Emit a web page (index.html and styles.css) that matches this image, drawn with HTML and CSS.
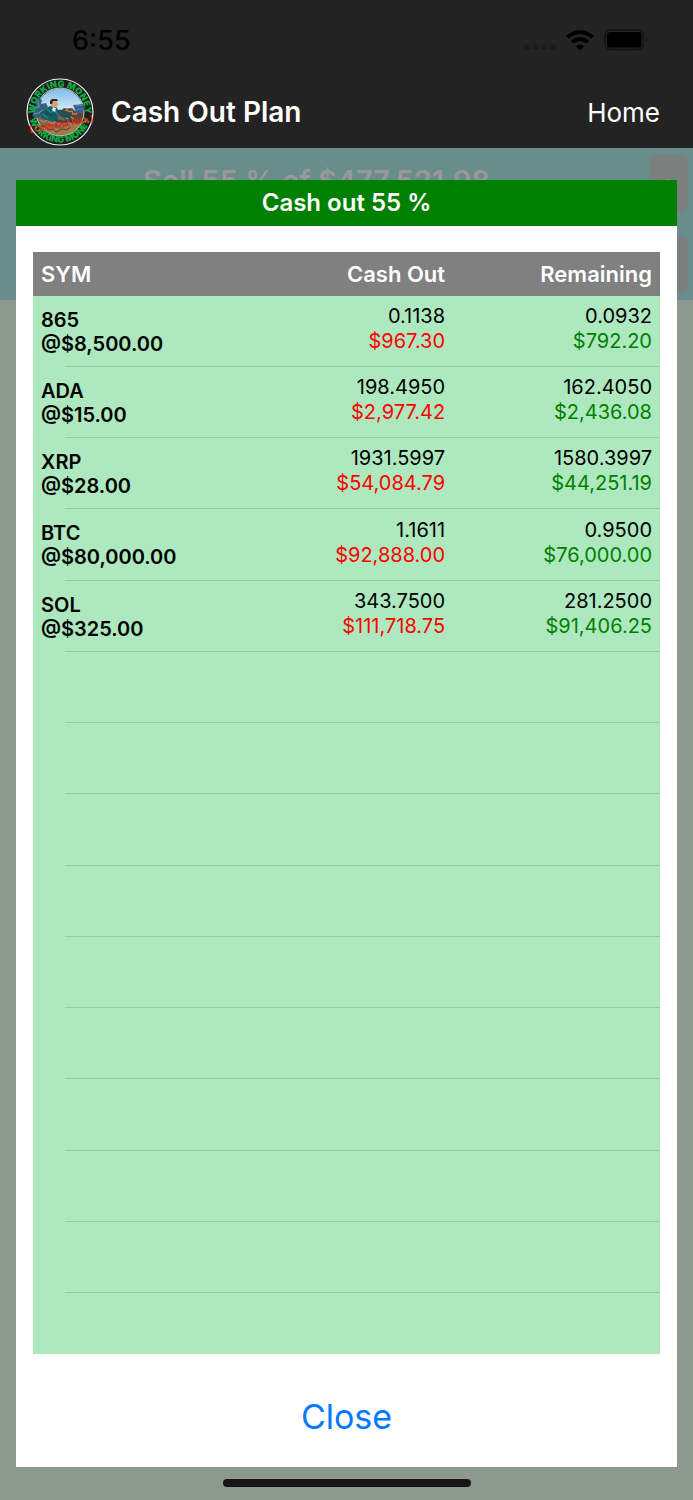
FILE: index.html
```html
<!DOCTYPE html>
<html lang="en">
<head>
<meta charset="utf-8">
<meta name="viewport" content="width=device-width, initial-scale=1">
<title>Cash Out Plan</title>
<link rel="stylesheet" href="styles.css">
</head>
<body>
<div class="screen">
  <header class="topbar">
    <div class="status">
      <span class="time">6:55</span>
      <div class="indicators">
        <svg class="signal" width="32" height="6" viewBox="0 0 32 6" aria-hidden="true"><g fill="#1a1a1a"><circle cx="3" cy="3" r="2.800"/><circle cx="11.600" cy="3" r="2.800"/><circle cx="20.200" cy="3" r="2.800"/><circle cx="28.800" cy="3" r="2.800"/></g></svg>
        <svg class="wifi" width="28" height="22" viewBox="0 0 28 22" aria-hidden="true"><path d="M1.500 8.200A18 18 0 0 1 26.500 8.200" fill="none" stroke="#000" stroke-width="4"/><path d="M6.300 13.100A11.200 11.200 0 0 1 21.700 13.100" fill="none" stroke="#000" stroke-width="4"/><path d="M14 21.500L9.800 17.300A6 6 0 0 1 18.200 17.300Z" fill="#000"/></svg>
        <svg class="battery" width="45" height="22" viewBox="0 0 45 22" aria-hidden="true"><rect x="1" y="1" width="38.500" height="19.500" rx="6" fill="none" stroke="#151515" stroke-width="1.800"/><rect x="3" y="3" width="34.500" height="15.500" rx="3.500" fill="#000"/><path d="M42 7.800C44.400 8.500 44.400 13 42 13.700Z" fill="#151515"/></svg>
      </div>
    </div>
    <nav class="nav">
      <svg class="logo" viewBox="0 0 68 68" role="img" aria-label="Working Money Cash Out Plan">
        <defs>
          <path id="arc-top" d="M9.500 39A25 25 0 1 1 58.500 39"/>
          <path id="arc-bottom" d="M3.500 28A31 31 0 1 0 64.500 28"/>
          <clipPath id="scene"><circle cx="34" cy="34" r="23.500"/></clipPath>
          <linearGradient id="sky" x1="0" y1="0" x2="0" y2="1"><stop offset="0" stop-color="#79b9e8"/><stop offset="0.550" stop-color="#e4f3fb"/></linearGradient>
        </defs>
        <circle cx="34" cy="34" r="33" fill="#1c1d1c" stroke="#eee" stroke-width="1.200"/>
        <g clip-path="url(#scene)">
          <rect x="9" y="9" width="50" height="50" fill="url(#sky)"/>
          <path d="M9 41l10-5 14 0 5-4 5-2 6 3 10-3v30H9z" fill="#806047"/>
          <path d="M33 34l5-4 4 1 4-1 5 5 8-2v9l-10 4-9-3z" fill="#57443a"/>
          <path d="M12 52l10-4 13 3 12-6 12 3v12H12z" fill="#a27850"/>
          <path d="M39 33l2-1 2 2 3-1 1 3 4 0M36 37l3 1 2 3 4-2 4 3M14 42l4 2 3-2 4 4 5-2 6 4 4-4 7 2" fill="none" stroke="#b58660" stroke-width="1.300"/>
          <path d="M12 46l3 2 4 0 4 4 4-1 3 3 6-3 4 1 5-3" fill="none" stroke="#5a3e2a" stroke-width="1"/>
        </g>
        <circle cx="34" cy="34" r="24" fill="none" stroke="#ddd" stroke-width="0.900"/>
        <path d="M47 27l11-1 1 4-3 5-6-1z" fill="#315f8e"/>
        <path d="M49 28l8-1M51 31l6 0" stroke="#5488b4" stroke-width="1"/>
        <path d="M5 31l5-3-1-4 3-4 4 2-1 4 5-1 2 4-4 3 1 4-7 4-6-2 2-3z" fill="#345f7c"/>
        <path d="M8 31l6-3M12 22l1 7M7 36l6-1 4-3" fill="none" stroke="#7095ad" stroke-width="1.100"/>
        <path d="M19 31l5-3 6 1 4 5-3 9-8 0-8-3-1-5z" fill="#126166"/>
        <path d="M19 33l5 4 8-1 11 3 2 4-8 1-8-2M30 36l4-3 10 3" fill="none" stroke="#1b5058" stroke-width="2.600"/>
        <path d="M21 31l3 3 5-1 4 5M16 36l6 4" fill="none" stroke="#2a8583" stroke-width="1.300"/>
        <path d="M26 22l4 0 2 4-1 3-5 0-2-4z" fill="#d99d75"/>
        <path d="M24 26l0-3 2-2 5 0 1 2-5 0-1 3z" fill="#38241b"/>
        <path d="M27 29l3 1-1 4-3-2z" fill="#eee"/>
        <text class="ring-text"><textPath href="#arc-top" startOffset="50%">WORKING MONEY</textPath></text>
        <text class="ring-text"><textPath href="#arc-bottom" startOffset="50%">WORKING MONEY</textPath></text>
        <text class="stamp" x="35" y="49" transform="rotate(-10 35 46)">[ Cash Out Plan ]</text>
      </svg>
      <h1 class="title">Cash Out Plan</h1>
      <a class="home" href="#">Home</a>
    </nav>
  </header>

  <section class="summary">
    <p class="sell">Sell 55 % of $477,521.98</p>
    <div class="steps">
      <button class="step" type="button">+</button>
      <button class="step" type="button">−</button>
    </div>
  </section>

  <main class="modal" role="dialog" aria-labelledby="plan-title">
    <h2 class="modal-title" id="plan-title">Cash out 55 %</h2>
    <div class="sheet">
      <table class="plan">
        <thead>
          <tr><th class="sym">SYM</th><th class="out">Cash Out</th><th class="rest">Remaining</th></tr>
        </thead>
        <tbody>
          <tr><th scope="row">865<br>@$8,500.00</th><td>0.1138<span class="sold">$967.30</span></td><td>0.0932<span class="kept">$792.20</span></td></tr>
          <tr><th scope="row">ADA<br>@$15.00</th><td>198.4950<span class="sold">$2,977.42</span></td><td>162.4050<span class="kept">$2,436.08</span></td></tr>
          <tr><th scope="row">XRP<br>@$28.00</th><td>1931.5997<span class="sold">$54,084.79</span></td><td>1580.3997<span class="kept">$44,251.19</span></td></tr>
          <tr><th scope="row">BTC<br>@$80,000.00</th><td>1.1611<span class="sold">$92,888.00</span></td><td>0.9500<span class="kept">$76,000.00</span></td></tr>
          <tr><th scope="row">SOL<br>@$325.00</th><td>343.7500<span class="sold">$111,718.75</span></td><td>281.2500<span class="kept">$91,406.25</span></td></tr>
          <tr><td colspan="3"></td></tr>
          <tr><td colspan="3"></td></tr>
          <tr><td colspan="3"></td></tr>
          <tr><td colspan="3"></td></tr>
          <tr><td colspan="3"></td></tr>
          <tr><td colspan="3"></td></tr>
          <tr><td colspan="3"></td></tr>
          <tr><td colspan="3"></td></tr>
          <tr><td colspan="3"></td></tr>
        </tbody>
      </table>
    </div>
    <button class="close" type="button">Close</button>
  </main>
  <div class="home-indicator"></div>
</div>
</body>
</html>
```
FILE: styles.css
```css
* { box-sizing: border-box; }

body {
  margin: 0;
  font-family: Inter, "Liberation Sans", sans-serif;
  color: #000;
}

.screen {
  position: relative;
  min-height: 100vh;
  background: #8c998e;
}

.topbar {
  background: #232323;
  height: 148px;
}

.status {
  display: flex;
  justify-content: space-between;
  align-items: center;
  height: 76px;
  padding: 4px 44px 0 72px;
}

.time {
  font-size: 27px;
  font-weight: 500;
}

.indicators {
  display: flex;
  align-items: center;
  gap: 10px;
}

.signal { margin-top: 14px; }

.nav {
  display: flex;
  align-items: center;
  height: 72px;
  padding: 0 33px 0 26px;
}

.logo {
  width: 68px;
  height: 68px;
  overflow: visible;
}

.ring-text {
  font-size: 9px;
  font-weight: 900;
  fill: #11a840;
  text-anchor: middle;
}

.stamp {
  font-size: 8px;
  font-weight: 700;
  fill: #f22208;
  text-anchor: middle;
}

.title {
  margin: 0 auto 0 17px;
  font-size: 28px;
  font-weight: 600;
  color: #fff;
}

.home {
  font-size: 26px;
  color: #fff;
  text-decoration: none;
}

.summary {
  display: flex;
  height: 152px;
  padding: 7px 5px 7px 0;
  background: #688d8a;
}

.sell {
  flex: 1;
  margin: 8px 16px 0 0;
  text-align: center;
  font-size: 29px;
  line-height: 36px;
  font-weight: 600;
  color: #999;
}

.steps {
  display: flex;
  flex-direction: column;
  justify-content: space-between;
}

.step {
  width: 39px;
  height: 57px;
  padding: 0;
  border: 0;
  border-radius: 7px;
  background: #7b807e;
  color: #999;
  font: 500 24px Inter, sans-serif;
}

.modal {
  position: absolute;
  top: 180px;
  right: 16px;
  bottom: 33px;
  left: 16px;
  display: flex;
  flex-direction: column;
  background: #fff;
}

.modal-title {
  margin: 0;
  background: #008000;
  color: #fff;
  text-align: center;
  font-size: 24px;
  line-height: 46px;
  font-weight: 600;
}

.sheet {
  flex: 1;
  margin: 26px 17px 0;
  background: #aee8be;
}

.plan {
  width: 100%;
  border-collapse: collapse;
  table-layout: fixed;
  font-size: 20px;
  line-height: 25px;
}

.plan th,
.plan td {
  padding: 0 8px;
  text-align: right;
}

.plan thead tr {
  height: 44px;
  background: #808080;
  color: #fff;
  font-size: 22px;
}

.plan thead th { font-weight: 600; }

.sym { width: 34%; }
.out { width: 33%; }

.plan .sym,
.plan tbody th {
  text-align: left;
}

.plan tbody th {
  font-weight: 600;
  line-height: 24px;
}

.plan tbody tr {
  height: 71px;
  background: linear-gradient(#97caa6, #97caa6) right bottom / calc(100% - 32px) 1px no-repeat;
}

.plan tbody tr:nth-child(4n) { height: 72px; }

.plan tbody td { padding-bottom: 5px; }

.plan span { display: block; }

.sold { color: #f00; }
.kept { color: #008000; }

.close {
  height: 113px;
  padding: 11px 0 0;
  border: 0;
  background: none;
  color: #007aff;
  font: 400 34px Inter, sans-serif;
}

.home-indicator {
  position: absolute;
  bottom: 13px;
  left: 50%;
  width: 248px;
  height: 8px;
  margin-left: -124px;
  border-radius: 4px;
  background: #161616;
}
```
